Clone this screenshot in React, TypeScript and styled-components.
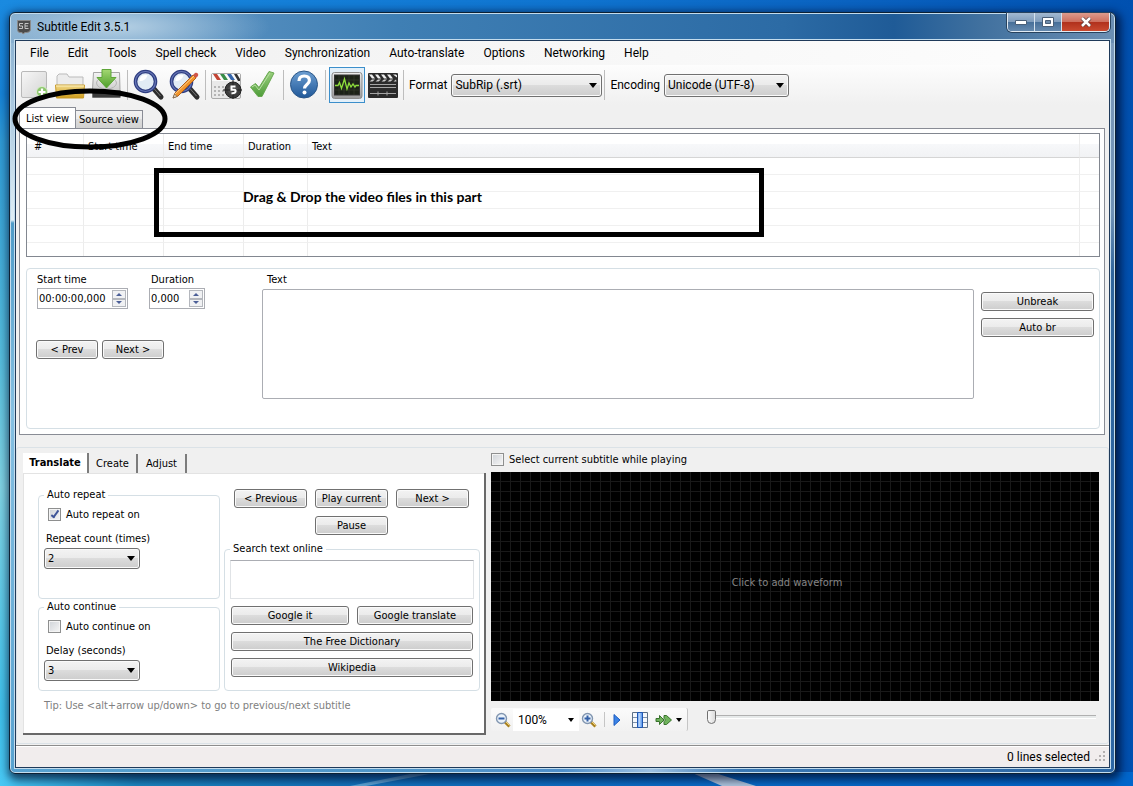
import React from 'react';
import styled, { createGlobalStyle, css } from 'styled-components';

const ui = '"DejaVu Sans Condensed", "DejaVu Sans", "Liberation Sans", sans-serif';
const menuFont = 'Roboto, "Noto Sans", sans-serif';

const GlobalStyle = createGlobalStyle`
  *, *::before, *::after { box-sizing: border-box; }
  body { margin: 0; font: 11px/14px ${ui}; color: #000; }
  button, input, select, textarea { font: inherit; color: inherit; margin: 0; }
`;

/* ---------- desktop and window frame ---------- */

const Desktop = styled.div`
  position: relative;
  min-height: 100vh;
  display: flex;
  padding: 12px 17px 12px 9px;
  overflow: hidden;
  background:
    linear-gradient(90deg, #48c8f4 0%, #1b86c0 12%, #1373bc 30%, #0a6cc8 60%, #0066cc 100%) bottom / 100% 14px no-repeat,
    linear-gradient(180deg, #1a8ae0 0%, #1684d8 12%, #2f9ad4 18%, #54bcdc 45%, #7fd2e2 62%, #3fc0ea 90%, #48c8f4 100%) left / 14px 100% no-repeat,
    linear-gradient(90deg, #1a8ae0 0%, #0f74d0 50%, #0a62c0 75%, #0050b0 100%);
`;

const Streaks = styled.svg`
  position: absolute;
  left: 0;
  bottom: 0;
`;

const Window = styled.main`
  position: relative;
  flex: 1;
  min-width: 0;
  display: flex;
  flex-direction: column;
  padding: 0 5px 5px;
  border: 1px solid #0d2134;
  border-radius: 6px;
  background:
    radial-gradient(ellipse 150px 34px at 110px 14px, #b4cfe3 0%, transparent 100%),
    linear-gradient(90deg, #7fa9cc 0%, #5c93c2 14%, #3f7fb4 35%, #2c6ba5 70%, #1f5b97 80%, #41719f 88%, #6c8fb3 100%) top / 100% 30px no-repeat,
    linear-gradient(90deg, #58a2d0 0%, #4f95c8 35%, #4f8fca 50%, #9dc0e2 58%, #3a78b4 66%, #2c66a4 100%) bottom / 100% 6px no-repeat,
    linear-gradient(180deg, #7fa9cc 0, #dfeef6 207px, #4f9bc8 210px, #86c0e2 400px, #58a2d0 100%) left / 8px 100% no-repeat,
    linear-gradient(180deg, #7f9cbc 0, #6f91b5 200px, #2f659c 260px, #2c66a4 100%);
  box-shadow: inset 0 0 0 1px #c3dced, 2px 3px 9px 3px rgba(0, 10, 40, 0.7);
`;

const TitleBar = styled.header`
  display: flex;
  align-items: center;
  height: 27px;
  padding-left: 1px;
`;

const Title = styled.h1`
  flex: 1;
  margin: 0 0 0 5px;
  font: 12px/18px ${menuFont};
`;

const Caption = styled.div`
  display: flex;
  align-self: flex-start;
  border: 1px solid #e1ebf4;
  border-top: 0;
  border-radius: 0 0 5px 5px;
  overflow: hidden;
  box-shadow: 0 0 0 1px #27425e;
`;

const CaptionButton = styled.button<{ $close?: boolean }>`
  display: grid;
  place-items: center;
  width: ${(p) => (p.$close ? 47 : 27)}px;
  height: 18px;
  padding: 0;
  border: 0;
  border-right: ${(p) => (p.$close ? '0' : '1px solid #d5e2ee')};
  background: ${(p) =>
    p.$close
      ? 'linear-gradient(#dc9b8d 0%, #ce6f5e 48%, #b0301c 50%, #c94a30 100%)'
      : 'linear-gradient(#a3b9d1 0%, #7f9cbc 48%, #466e98 50%, #6589ae 100%)'};
`;

const Client = styled.div`
  flex: 1;
  display: flex;
  flex-direction: column;
  border: 1px solid #1f3a5a;
  background: #f0f0f0;
  box-shadow: 0 0 0 1px #c3dced;
`;

/* ---------- menu and toolbar ---------- */

const MenuBar = styled.nav`
  display: flex;
  gap: 19px;
  height: 24px;
  padding-left: 14px;
  background: linear-gradient(90deg, #f0f0f0, #fcfcfc 90%);
`;

const MenuItem = styled.button`
  padding: 0;
  border: 0;
  background: none;
  font: 12px/24px ${menuFont};
`;

const Toolbar = styled.div`
  display: flex;
  align-items: center;
  height: 40px;
  padding: 0 1px;
  background: linear-gradient(#fdfdfd, #f0f0f0);
`;

const ToolButton = styled.button<{ $on?: boolean }>`
  width: 36px;
  height: 36px;
  padding: 0;
  border: 0;
  background: ${(p) => (p.$on ? '#e4f0f9' : 'none')};
  box-shadow: ${(p) => (p.$on ? 'inset 0 0 0 1px #3c8fcb' : 'none')};
  svg { display: block; }
`;

const ToolSeparator = styled.span`
  width: 1px;
  height: 30px;
  margin: 0 3px 0 2px;
  background: #bdbdbd;
`;

const ToolLabel = styled.label`
  margin: 0 4px 0 2px;
  font: 12px/20px ${menuFont};
`;

/* ---------- shared controls ---------- */

const glossy = css`
  border: 1px solid #707070;
  border-radius: 3px;
  background: linear-gradient(#f3f3f3 0%, #ebebeb 48%, #dcdcdc 50%, #cdcdcd 100%);
  box-shadow: inset 0 0 0 1px #fafafa;
`;

const Button = styled.button`
  ${glossy}
  height: 19px;
  padding: 1px 4px 0;
  line-height: 16px;
  white-space: nowrap;
`;

const Combo = styled.span<{ $width: number; $tall?: boolean }>`
  display: grid;
  align-items: center;
  width: ${(p) => p.$width}px;
  select, svg { grid-area: 1 / 1; }
  select {
    ${glossy}
    appearance: none;
    width: 100%;
    height: ${(p) => (p.$tall ? 23 : 21)}px;
    padding: 0 20px 0 3px;
    ${(p) => p.$tall && `font: 12px/20px ${menuFont};`}
  }
  svg { justify-self: end; margin-right: 5px; pointer-events: none; }
`;

const Check = styled.label`
  display: flex;
  align-items: center;
  gap: 5px;
  height: 13px;
`;

const Tick = styled.input`
  appearance: none;
  position: relative;
  width: 13px;
  height: 13px;
  border: 1px solid #8e8f8f;
  background: linear-gradient(135deg, #cfd3d8, #f6f6f6);
  box-shadow: inset 0 0 0 1px #f4f4f4;
  &:checked::after {
    content: '';
    position: absolute;
    left: 4px;
    top: 0;
    width: 4px;
    height: 9px;
    border: solid #3f5598;
    border-width: 0 2px 2px 0;
    transform: rotate(36deg);
  }
`;

const Group = styled.fieldset`
  min-width: 0;
  margin: 0;
  padding: 0 5px;
  border: 1px solid #d5dfe5;
  border-radius: 4px;
  legend { margin-left: 0; padding: 0 3px; }
`;

/* ---------- upper tab page ---------- */

const ViewTabs = styled.div`
  display: flex;
  align-items: flex-end;
  height: 23px;
  padding-left: 3px;
`;

const ViewTab = styled.button<{ $on?: boolean }>`
  height: ${(p) => (p.$on ? 21 : 18)}px;
  width: ${(p) => (p.$on ? 57 : 67)}px;
  padding: 1px 0 0;
  border: 1px solid #898c95;
  border-bottom: 0;
  border-left-width: ${(p) => (p.$on ? 1 : 0)}px;
  background: ${(p) => (p.$on ? '#fff' : 'linear-gradient(#f2f2f2 0%, #ebebeb 48%, #dcdcdc 50%, #d2d2d2 100%)')};
  white-space: nowrap;
`;

const ViewPage = styled.section`
  position: relative;
  display: flex;
  flex-direction: column;
  gap: 11px;
  margin: 0 4px 0 3px;
  padding: 4px 4px 5px 6px;
  border: 1px solid #898c95;
  background: #fff;
`;

const ListFrame = styled.div`
  height: 124px;
  border: 1px solid #828790;
  overflow: hidden;
`;

const List = styled.table`
  width: 100%;
  table-layout: fixed;
  border-collapse: separate;
  border-spacing: 0;
  th, td { padding: 0; border-right: 1px solid #ececec; }
  th:last-child, td:last-child { border-right: 0; }
  th {
    height: 24px;
    padding: 3px 0 0 4px;
    border-bottom: 1px solid #d5d5d5;
    background: linear-gradient(#fff 0%, #fff 42%, #f7f8fa 44%, #f1f2f4 100%);
    font-weight: normal;
    text-align: left;
  }
  th:first-child { padding-left: 7px; }
  td { height: 17px; border-bottom: 1px solid #f0f0f0; }
`;

const EditBox = styled.div`
  display: grid;
  grid-template-columns: 226px minmax(0, 1fr) 113px;
  padding: 4px 5px 29px 9px;
  border: 1px solid #d5dfe5;
  border-radius: 4px;
`;

const Timing = styled.div`
  display: flex;
  flex-direction: column;
  gap: 31px;
`;

const TimeRow = styled.div`
  display: flex;
  gap: 21px;
  padding-left: 1px;
`;

const Field = styled.label`
  display: flex;
  flex-direction: column;
  gap: 1px;
`;

const FieldName = styled.span`
  padding-left: 2px;
`;

const Spinner = styled.span<{ $width: number }>`
  display: flex;
  width: ${(p) => p.$width}px;
  height: 21px;
  padding: 1px;
  border: 1px solid #abadb3;
  input { flex: 1; min-width: 0; height: 16px; padding: 0; border: 0; background: none; outline: 0; }
`;

const Steps = styled.span`
  display: flex;
  flex-direction: column;
  width: 14px;
`;

const Step = styled.button`
  flex: 1;
  display: grid;
  place-items: center;
  padding: 0;
  border: 1px solid #b4b7bd;
  background: #f0f1f3;
`;

const ButtonRow = styled.div`
  display: flex;
  gap: 4px;
  ${Button} { width: 62px; }
`;

const TextField = styled(Field)`
  gap: 2px;
  padding-right: 7px;
  textarea {
    width: 100%;
    height: 110px;
    border: 1px solid #abadb3;
    border-radius: 2px;
    resize: none;
  }
  ${FieldName} { padding-left: 5px; }
`;

const BreakButtons = styled.div`
  display: flex;
  flex-direction: column;
  gap: 7px;
  padding-top: 19px;
`;

/* ---------- lower area ---------- */

const Lower = styled.section`
  flex: 1;
  display: flex;
  gap: 5px;
  margin-top: 12px;
  padding: 5px 9px 8px 6px;
  border: 1px solid #dbe2e7;
  border-radius: 3px;
`;

const ToolsPane = styled.div`
  width: 463px;
  display: flex;
  flex-direction: column;
`;

const PaneTabs = styled.div`
  display: flex;
  align-items: flex-end;
`;

const PaneTab = styled.button<{ $on?: boolean; $width: number }>`
  width: ${(p) => p.$width}px;
  height: ${(p) => (p.$on ? 20 : 19)}px;
  padding: 0;
  border: 0;
  border-right: 2px solid #7c7c7c;
  background: ${(p) => (p.$on ? '#fff' : 'none')};
  font-weight: ${(p) => (p.$on ? 'bold' : 'normal')};
`;

const PanePage = styled.div`
  flex: 1;
  display: grid;
  grid-template-columns: 182px 256px;
  grid-template-rows: auto 14px;
  gap: 8px 4px;
  align-content: start;
  padding: 15px 4px 0 15px;
  border: solid #696969;
  border-width: 0 2px 2px 0;
  box-shadow: inset 1px 1px 0 #e3e3e3;
  background: #fff;
`;

const Groups = styled.div`
  display: flex;
  flex-direction: column;
  gap: 1px;
`;

const OptionGroup = styled(Group)<{ $height: number }>`
  height: ${(p) => p.$height}px;
  ${Check} { margin: 6px 0 11px 4px; }
  ${Combo} { margin-top: 2px; }
`;

const OptionName = styled.label`
  display: block;
  padding-left: 2px;
`;

const Playback = styled.div`
  display: grid;
  grid-template-columns: repeat(3, 73px);
  gap: 8px;
  padding: 1px 0 7px 10px;
`;

const PauseButton = styled(Button)`
  grid-column: 2;
`;

const SearchGroup = styled(Group)`
  height: 149px;
  textarea {
    display: block;
    width: 244px;
    height: 39px;
    margin-top: 4px;
    border: 1px solid #e0e3e6;
    border-top-color: #abadb3;
    resize: none;
  }
`;

const SearchButtons = styled.div`
  display: grid;
  grid-template-columns: 118px 116px;
  gap: 7px 8px;
  padding: 7px 1px 0;
`;

const WideButton = styled(Button)`
  grid-column: 1 / -1;
`;

const Tip = styled.p`
  grid-column: 1 / -1;
  margin: 0 0 0 6px;
  color: #808080;
`;

const WavePane = styled.div`
  flex: 1;
  min-width: 0;
  display: flex;
  flex-direction: column;
  padding-bottom: 4px;
`;

const Waveform = styled.div`
  flex: 1;
  min-height: 229px;
  display: grid;
  place-items: center;
  margin: 6px 0 7px;
  padding: 0 16px 8px 0;
  color: #858585;
  background:
    repeating-linear-gradient(90deg, transparent 0 9px, #191919 9px 10px),
    repeating-linear-gradient(180deg, transparent 0 9px, #191919 9px 10px),
    #000;
`;

const WaveControls = styled.div`
  display: flex;
  align-items: flex-start;
  gap: 19px;
`;

const WaveBar = styled.div`
  display: flex;
  align-items: center;
  width: 197px;
  height: 23px;
  padding-left: 2px;
  border-right: 1px solid #c5c5c5;
  border-radius: 2px;
  background: linear-gradient(#fbfbfb, #f1f1f1);
`;

const MiniButton = styled.button<{ $width: number }>`
  display: grid;
  place-items: center;
  width: ${(p) => p.$width}px;
  height: 22px;
  padding: 0;
  border: 0;
  background: none;
`;

const ZoomCombo = styled(Combo)`
  select {
    height: 22px;
    border: 0;
    border-radius: 0;
    box-shadow: none;
    background: #fff;
    padding-left: 5px;
    font: 12px/20px ${menuFont};
  }
`;

const MiniSeparator = styled.span`
  width: 1px;
  height: 15px;
  margin: 0 4px;
  background: #c5c5c5;
`;

const Slider = styled.input`
  appearance: none;
  flex: 1;
  min-width: 0;
  height: 17px;
  margin-right: 3px;
  background: linear-gradient(#b0b0b0 0 1px, #e7eaea 1px 3px, #fff 3px 4px) 0 7px / 100% 4px no-repeat;
  &::-webkit-slider-thumb {
    appearance: none;
    width: 9px;
    height: 14px;
    border: 1px solid #707070;
    border-radius: 2px 2px 5px 5px;
    background: linear-gradient(90deg, #fafafa, #dcdcdc);
  }
`;

const StatusBar = styled.footer`
  display: flex;
  justify-content: flex-end;
  align-items: center;
  gap: 5px;
  height: 22px;
  margin-top: 1px;
  padding-right: 2px;
  border-top: 1px solid #8d8d8d;
  box-shadow: inset 0 1px 0 #fff;
  background: #f1eded;
  font: 12px/20px ${menuFont};
`;

/* ---------- markup drawn over the window ---------- */

const Ring = styled.svg`
  position: absolute;
  left: 1px;
  top: 73px;
  z-index: 1;
  pointer-events: none;
`;

const DropHint = styled.div`
  position: absolute;
  left: 134px;
  top: 39px;
  width: 610px;
  height: 69px;
  padding: 14px 84px;
  border: 5px solid #000;
  font: bold 14px/20px Lato, "Open Sans", sans-serif;
`;

/* ---------- drawings ---------- */

const Arrow = () => (
  <svg width="8" height="5" aria-hidden="true"><path d="M0 0h8L4 5z" /></svg>
);

const Pic = ({ children }: { children: React.ReactNode }) => (
  <svg width="36" height="36" viewBox="0 0 36 36" aria-hidden="true">{children}</svg>
);

const NewIcon = () => (
  <Pic>
    <defs><linearGradient id="paper" x2="1" y2="1"><stop stopColor="#f7f7f7" /><stop offset="1" stopColor="#d3d3d3" /></linearGradient></defs>
    <rect x="4.5" y="4.5" width="25" height="26" rx="1.5" fill="url(#paper)" stroke="#b9b9b9" />
    <circle cx="25" cy="25" r="5.5" fill="#8cc66c" stroke="#d9edcd" />
    <path d="M25 21.500v7M21.500 25h7" stroke="#fff" strokeWidth="2.2" />
  </Pic>
);

const OpenIcon = () => (
  <Pic>
    <defs><linearGradient id="folder" y2="1" x2="0"><stop stopColor="#f1d98a" /><stop offset="1" stopColor="#cf9d1c" /></linearGradient></defs>
    <path d="M4 30V9l2-2h8l2 3h14v18z" fill="#ececec" stroke="#bbb" />
    <path d="M2.500 18h29l-1 13h-27z" fill="url(#folder)" stroke="#c79a2a" />
    <path d="M3 19h28" stroke="#fbeeb9" />
  </Pic>
);

const SaveIcon = () => (
  <Pic>
    <defs>
      <linearGradient id="down" y2="1" x2="0"><stop stopColor="#a4d873" /><stop offset="1" stopColor="#4c9d28" /></linearGradient>
      <linearGradient id="drive" y2="1" x2="0"><stop stopColor="#f4f4f4" /><stop offset="1" stopColor="#bdbdbd" /></linearGradient>
    </defs>
    <path d="M4.500 5.500h26l.5 17v8H3.500v-8z" fill="url(#drive)" stroke="#a5a5a5" />
    <path d="M3.500 23.500h28v7h-28z" fill="#3b3b3b" />
    <ellipse cx="17.500" cy="16" rx="10" ry="6" fill="none" stroke="#b5b5b5" />
    <path d="M13 2.500h9v8h5l-9.500 10.500L8 10.500h5z" fill="url(#down)" stroke="#5fa639" />
  </Pic>
);

const Lens = () => (
  <>
    <path d="M23 22l7 8" stroke="#2d2d2d" strokeWidth="5" strokeLinecap="round" />
    <path d="M22.500 21l7 8" stroke="#777" strokeWidth="1" />
    <circle cx="14.500" cy="14.500" r="10" fill="#e2ecf5" stroke="#2e3d80" strokeWidth="3.600" />
    <circle cx="14.500" cy="14.500" r="10" fill="none" stroke="#6676b5" strokeWidth="1.200" />
    <path d="M8.500 14a6 6 0 0 1 8-6c-1 4-4 6-8 6z" fill="#fff" />
  </>
);

const FindIcon = () => <Pic><Lens /></Pic>;

const ReplaceIcon = () => (
  <Pic>
    <Lens />
    <path d="M6 31l2-5L26 8l3 3-18 18z" fill="#f0942c" stroke="#b5601a" />
    <path d="M8 27L27 9" stroke="#ffd08a" />
    <path d="M26 8l2-2c2-1 4 1 3 3l-2 2z" fill="#d05548" />
    <path d="M6 31l1.500-4 2.500 2.500z" fill="#e9d7b8" stroke="#444" strokeWidth=".5" />
  </Pic>
);

const SyncIcon = () => (
  <Pic>
    <rect x="2.5" y="6.500" width="29" height="25" rx="1.5" fill="#e9e9e9" stroke="#aaa" />
    <path d="M3 7h28v7H3z" fill="#fafafa" />
    <path d="M4 7h4l4 6H8z" fill="#c34535" /><path d="M11 7h4l4 6h-4z" fill="#388c48" />
    <path d="M18 7h4l4 6h-4z" fill="#3465aa" /><path d="M25 7h3l3 5v2h-2z" fill="#333" />
    <path d="M5 20h14M5 24h12M5 28h12" stroke="#b5b5b5" strokeWidth="2" strokeDasharray="2 2" />
    <circle cx="24" cy="23" r="8" fill="#3d3d3d" stroke="#222" />
    <circle cx="24" cy="23" r="5" fill="#4d4d4d" />
    <path d="M24 13v19M14 23h19" stroke="#222" />
    <path d="M26.500 19.500h-4v3.200h2.500q2 0 1.500 2-.3 1.800-4 1.500" fill="none" stroke="#fff" strokeWidth="2" />
  </Pic>
);

const OkIcon = () => (
  <Pic>
    <defs><linearGradient id="tick" y2="1" x2="0"><stop stopColor="#9bd07f" /><stop offset="1" stopColor="#4f9d3a" /></linearGradient></defs>
    <path d="M5.500 20l5-3.500 3.500 4L24 4.500l5 1.500L17 29.500h-4z" fill="url(#tick)" stroke="#68a850" strokeLinejoin="round" />
    <path d="M7 20l3-2 4 5L25 6" fill="none" stroke="#b8e0a2" />
  </Pic>
);

const HelpIcon = () => (
  <Pic>
    <defs><linearGradient id="help" y2="1" x2="0"><stop stopColor="#6d9fd2" /><stop offset="1" stopColor="#1f5798" /></linearGradient></defs>
    <circle cx="17" cy="17.5" r="13.5" fill="url(#help)" stroke="#2a5688" />
    <path d="M12 14q0-5 5.200-5t5.200 4.500c0 4-4.900 4-4.900 8" fill="none" stroke="#fff" strokeWidth="3.200" />
    <circle cx="17.5" cy="25.5" r="2" fill="#fff" />
  </Pic>
);

const WaveIcon = () => (
  <Pic>
    <defs><linearGradient id="bezel" y2="1" x2="0"><stop stopColor="#eee" /><stop offset="1" stopColor="#999" /></linearGradient></defs>
    <rect x="3" y="5.500" width="30" height="26" rx="2.500" fill="url(#bezel)" stroke="#8c8c8c" />
    <rect x="5.500" y="8" width="25" height="20" fill="#1c2218" stroke="#333" />
    <path d="M10 8v20M15 8v20M20 8v20M25 8v20M6 13h24M6 18h24M6 23h24" stroke="#39422f" strokeWidth=".6" />
    <path d="M6 18.500h3l1.500-3 2 6 3-9.500 2.500 10 2-6 2 4 2-3 2 3 1-1.500h3" fill="none" stroke="#8ede3c" strokeWidth="1.300" />
  </Pic>
);

const VideoIcon = () => (
  <Pic>
    <rect x="3" y="6" width="30" height="25" rx="1" fill="#2b2b2b" />
    <path d="M4 7.500h3l3 4H7zM10 7.500h3l3 4h-3zM16 7.500h3l3 4h-3zM22 7.500h3l3 4h-3zM28 7.500h3l1 1v2z" fill="#eee" />
    <path d="M7 12.500l-2.500 2h3l2.500-2zM13 12.500l-2.500 2h3l2.500-2zM19 12.500l-2.500 2h3l2.500-2zM25 12.500l-2.500 2h3l2.500-2zM31 12.500l-2.500 2h3z" fill="#ccc" />
    <path d="M5 17.500h26M5 20.500h26M5 26.500h26M13 24.500v4M22 24.500v4" stroke="#a5a5a5" />
  </Pic>
);

const AppIcon = () => (
  <svg width="16" height="16" viewBox="0 0 16 16" aria-hidden="true">
    <path d="M1.500 1.500h13v9q0 3-4 3H9l-2 1.500-1-1.500H4q-2.500 0-2.500-3z" fill="#4b4b4b" stroke="#8b8b8b" />
    <path d="M7 4.500H3.500V7H6.500V9.500H3M12.500 4.500H9v5h3.500M9 7h3" fill="none" stroke="#c4c4c4" />
  </svg>
);

const MiniLens = ({ plus }: { plus?: boolean }) => (
  <svg width="16" height="16" viewBox="0 0 16 16" aria-hidden="true">
    <path d="M10 10l4.500 4.500" stroke="#a8801e" strokeWidth="3" />
    <path d="M10.500 9.500l4 4" stroke="#efd27c" />
    <circle cx="6.500" cy="6.500" r="5" fill="#eaf2fa" stroke="#8296b0" strokeWidth="1.400" />
    <path d={plus ? 'M3.500 6.500h6M6.500 3.500v6' : 'M3.500 6.500h6'} stroke="#3561a8" strokeWidth="2" />
  </svg>
);

const PlayIcon = () => (
  <svg width="8" height="12" aria-hidden="true"><path d="M1 .5L7 6l-6 5.500z" fill="#3b83e6" stroke="#1d5dc0" /></svg>
);

const FilmIcon = () => (
  <svg width="16" height="16" viewBox="0 0 16 16" aria-hidden="true">
    <path d="M.5.5h15v15H.5z" fill="#f5f8fc" stroke="#5d7087" />
    <path d="M1 5.500h14M1 10.500h14" stroke="#7f93ab" />
    <path d="M5.500.5h5v15h-5z" fill="#6ca3ee" stroke="#1e57b4" />
    <path d="M7.500 1v14" stroke="#b5d3fa" strokeWidth="2" />
  </svg>
);

const ForwardIcon = () => (
  <svg width="18" height="12" viewBox="0 0 18 12" aria-hidden="true">
    <path d="M1 4.500h3.500V1.500L9 6l-4.500 4.500v-3H1zM9 4.500V1.500h2.500L16.500 6l-5 4.500H9v-3L10.500 6z" fill="#6fb35c" stroke="#39722d" />
  </svg>
);

const ResizeGrip = () => (
  <svg width="12" height="12" viewBox="0 0 12 12" aria-hidden="true">
    <path d="M8 0h2v2H8zM8 4h2v2H8zM8 8h2v2H8zM4 4h2v2H4zM4 8h2v2H4zM0 8h2v2H0z" fill="#b4b0b0" />
  </svg>
);

const UpDown = () => (
  <Steps>
    <Step type="button" aria-label="Increase"><svg width="6" height="3"><path d="M0 3h6L3 0z" fill="#4b5f97" /></svg></Step>
    <Step type="button" aria-label="Decrease"><svg width="6" height="3"><path d="M0 0h6L3 3z" fill="#4b5f97" /></svg></Step>
  </Steps>
);

const menus = ['File', 'Edit', 'Tools', 'Spell check', 'Video', 'Synchronization', 'Auto-translate', 'Options', 'Networking', 'Help'];
const rows = [1, 2, 3, 4, 5, 6];
const columns = ['#', 'Start time', 'End time', 'Duration', 'Text', ''];

export default function App() {
  return (
    <Desktop>
      <GlobalStyle />
      <Streaks width="900" height="14" aria-hidden="true">
        <path d="M350 14L420 0h20L366 14z" fill="#9ad2ee" opacity=".55" />
        <path d="M690 0h22l44 14h-34z" fill="#d9dde4" opacity=".8" />
      </Streaks>
      <Window>
        <TitleBar>
          <AppIcon />
          <Title>Subtitle Edit 3.5.1</Title>
          <Caption>
            <CaptionButton aria-label="Minimize">
              <svg width="12" height="5"><path d="M.5.500h11v4H.5z" fill="#fff" stroke="#4a5f78" /></svg>
            </CaptionButton>
            <CaptionButton aria-label="Maximize">
              <svg width="12" height="10"><path d="M.5.500h11v9H.5z" fill="#fff" stroke="#4a5f78" /><path d="M3.500 3.500h5v3h-5z" fill="#6f8cab" stroke="#4a5f78" /></svg>
            </CaptionButton>
            <CaptionButton $close aria-label="Close">
              <svg width="12" height="10"><path d="M2 1l8 8M10 1L2 9" stroke="#5c3a3a" strokeWidth="4" /><path d="M2 1l8 8M10 1L2 9" stroke="#fff" strokeWidth="2.500" /></svg>
            </CaptionButton>
          </Caption>
        </TitleBar>
        <Client>
          <MenuBar>
            {menus.map((m) => <MenuItem key={m}>{m}</MenuItem>)}
          </MenuBar>
          <Toolbar>
            <ToolButton aria-label="New"><NewIcon /></ToolButton>
            <ToolButton aria-label="Open"><OpenIcon /></ToolButton>
            <ToolButton aria-label="Save"><SaveIcon /></ToolButton>
            <ToolSeparator />
            <ToolButton aria-label="Find"><FindIcon /></ToolButton>
            <ToolButton aria-label="Replace"><ReplaceIcon /></ToolButton>
            <ToolSeparator />
            <ToolButton aria-label="Visual sync"><SyncIcon /></ToolButton>
            <ToolButton aria-label="Check spelling"><OkIcon /></ToolButton>
            <ToolSeparator />
            <ToolButton aria-label="Help"><HelpIcon /></ToolButton>
            <ToolSeparator />
            <ToolButton $on aria-label="Waveform"><WaveIcon /></ToolButton>
            <ToolButton aria-label="Video"><VideoIcon /></ToolButton>
            <ToolSeparator />
            <ToolLabel htmlFor="format">Format</ToolLabel>
            <Combo $width={151} $tall>
              <select id="format"><option>SubRip (.srt)</option></select>
              <Arrow />
            </Combo>
            <ToolSeparator />
            <ToolLabel htmlFor="encoding">Encoding</ToolLabel>
            <Combo $width={125} $tall>
              <select id="encoding"><option>Unicode (UTF-8)</option></select>
              <Arrow />
            </Combo>
          </Toolbar>

          <ViewTabs>
            <ViewTab $on>List view</ViewTab>
            <ViewTab>Source view</ViewTab>
          </ViewTabs>
          <ViewPage>
            <ListFrame>
              <List>
                <colgroup>
                  <col width="57" /><col width="80" /><col width="80" /><col width="64" /><col /><col width="19" />
                </colgroup>
                <thead>
                  <tr>{columns.map((c) => <th key={c}>{c}</th>)}</tr>
                </thead>
                <tbody>
                  {rows.map((r) => <tr key={r}>{columns.map((c) => <td key={c} />)}</tr>)}
                </tbody>
              </List>
            </ListFrame>
            <EditBox>
              <Timing>
                <TimeRow>
                  <Field>
                    <span>Start time</span>
                    <Spinner $width={91}><input defaultValue="00:00:00,000" /><UpDown /></Spinner>
                  </Field>
                  <Field>
                    <FieldName>Duration</FieldName>
                    <Spinner $width={56}><input defaultValue="0,000" /><UpDown /></Spinner>
                  </Field>
                </TimeRow>
                <ButtonRow>
                  <Button>&lt; Prev</Button>
                  <Button>Next &gt;</Button>
                </ButtonRow>
              </Timing>
              <TextField>
                <FieldName>Text</FieldName>
                <textarea />
              </TextField>
              <BreakButtons>
                <Button>Unbreak</Button>
                <Button>Auto br</Button>
              </BreakButtons>
            </EditBox>
            <DropHint>Drag &amp; Drop the video files in this part</DropHint>
          </ViewPage>

          <Lower>
            <ToolsPane>
              <PaneTabs>
                <PaneTab $on $width={66}>Translate</PaneTab>
                <PaneTab $width={49}>Create</PaneTab>
                <PaneTab $width={49}>Adjust</PaneTab>
              </PaneTabs>
              <PanePage>
                <Groups>
                  <OptionGroup $height={111}>
                    <legend>Auto repeat</legend>
                    <Check><Tick type="checkbox" defaultChecked />Auto repeat on</Check>
                    <OptionName htmlFor="repeat">Repeat count (times)</OptionName>
                    <Combo $width={96}><select id="repeat"><option>2</option></select><Arrow /></Combo>
                  </OptionGroup>
                  <OptionGroup $height={91}>
                    <legend>Auto continue</legend>
                    <Check><Tick type="checkbox" />Auto continue on</Check>
                    <OptionName htmlFor="delay">Delay (seconds)</OptionName>
                    <Combo $width={96}><select id="delay"><option>3</option></select><Arrow /></Combo>
                  </OptionGroup>
                </Groups>
                <div>
                  <Playback>
                    <Button>&lt; Previous</Button>
                    <Button>Play current</Button>
                    <Button>Next &gt;</Button>
                    <PauseButton>Pause</PauseButton>
                  </Playback>
                  <SearchGroup>
                    <legend>Search text online</legend>
                    <textarea aria-label="Search text online" />
                    <SearchButtons>
                      <Button>Google it</Button>
                      <Button>Google translate</Button>
                      <WideButton>The Free Dictionary</WideButton>
                      <WideButton>Wikipedia</WideButton>
                    </SearchButtons>
                  </SearchGroup>
                </div>
                <Tip>Tip: Use &lt;alt+arrow up/down&gt; to go to previous/next subtitle</Tip>
              </PanePage>
            </ToolsPane>
            <WavePane>
              <Check><Tick type="checkbox" />Select current subtitle while playing</Check>
              <Waveform>Click to add waveform</Waveform>
              <WaveControls>
                <WaveBar>
                  <MiniButton $width={20} aria-label="Zoom out"><MiniLens /></MiniButton>
                  <ZoomCombo $width={66}>
                    <select aria-label="Zoom"><option>100%</option></select>
                    <svg width="6" height="4"><path d="M0 0h6L3 4z" /></svg>
                  </ZoomCombo>
                  <MiniButton $width={22} aria-label="Zoom in"><MiniLens plus /></MiniButton>
                  <MiniSeparator />
                  <MiniButton $width={16} aria-label="Play"><PlayIcon /></MiniButton>
                  <MiniButton $width={30} aria-label="Center"><FilmIcon /></MiniButton>
                  <MiniButton $width={16} aria-label="Play speed"><ForwardIcon /></MiniButton>
                  <MiniButton $width={16} aria-label="Speeds"><svg width="6" height="4"><path d="M0 0h6L3 4z" /></svg></MiniButton>
                </WaveBar>
                <Slider type="range" aria-label="Position" defaultValue={0} />
              </WaveControls>
            </WavePane>
          </Lower>
          <StatusBar>0 lines selected<ResizeGrip /></StatusBar>
        </Client>
        <Ring width="158" height="66" aria-hidden="true">
          <ellipse cx="79" cy="33" rx="75" ry="28" fill="none" stroke="#000" strokeWidth="5" />
        </Ring>
      </Window>
    </Desktop>
  );
}
